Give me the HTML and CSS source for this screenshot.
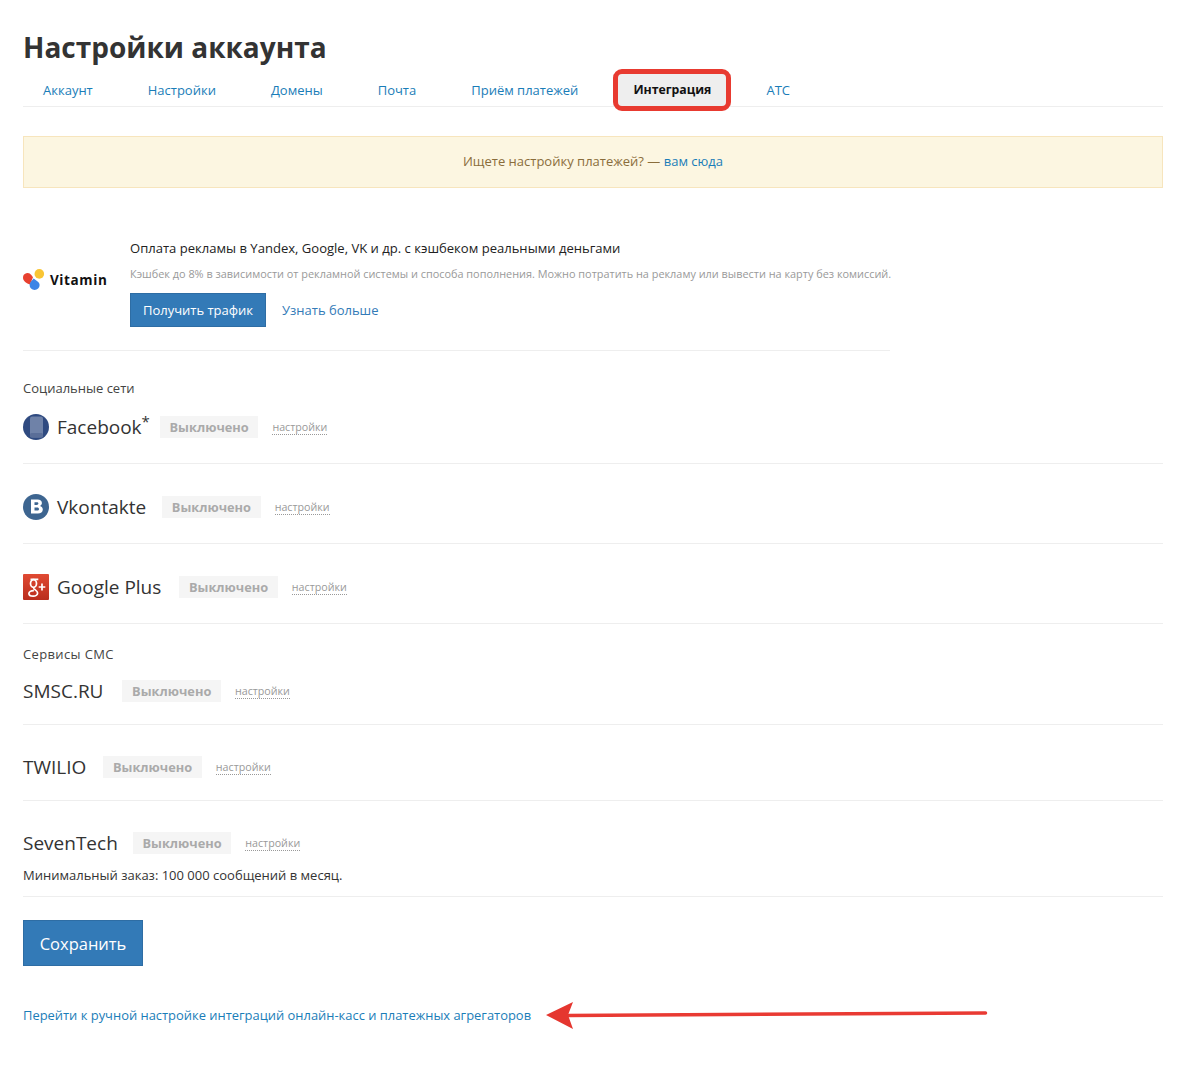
FILE: index.html
```html
<!DOCTYPE html>
<html lang="ru">
<head>
<meta charset="utf-8">
<title>Настройки аккаунта</title>
<link rel="stylesheet" href="styles.css">
</head>
<body>
<main class="page">
  <h1 class="title">Настройки аккаунта</h1>
  <nav class="tabs">
    <a class="tab">Аккаунт</a>
    <a class="tab">Настройки</a>
    <a class="tab">Домены</a>
    <a class="tab">Почта</a>
    <a class="tab">Приём платежей</a>
    <a class="tab tab-active">Интеграция</a>
    <a class="tab">АТС</a>
  </nav>
  <div class="notice">Ищете настройку платежей? — <a class="link">вам сюда</a></div>

  <section class="promo">
    <div class="vitamin">
      <svg class="vitamin-mark" width="22" height="22" viewBox="0 0 22 22" aria-hidden="true">
        <circle cx="16.300" cy="4.900" r="4.800" fill="#f9c534"/>
        <path d="M0 8.700a4.600 4.600 0 0 1 8.300-2.700l1.700 2.300-3 7.200C3.500 14.500 0 11.800 0 8.700z" fill="#e8412f"/>
        <path d="M10.500 9.500c2 1.600 6.100 3.300 6.100 6.500a5 5 0 0 1-10 0c0-2.800 2.800-4.700 3.900-6.500z" fill="#3d85e6"/>
      </svg>
      <span class="vitamin-name">Vitamin</span>
    </div>
    <div class="promo-body">
      <div class="promo-head">Оплата рекламы в Yandex, Google, VK и др. с кэшбеком реальными деньгами</div>
      <div class="promo-note">Кэшбек до 8% в зависимости от рекламной системы и способа пополнения. Можно потратить на рекламу или вывести на карту без комиссий.</div>
      <div class="promo-actions">
        <a class="btn btn-small">Получить трафик</a>
        <a class="more">Узнать больше</a>
      </div>
    </div>
  </section>

  <h2 class="group group-social">Социальные сети</h2>
  <div class="row row-fb">
    <svg class="icon" width="26" height="26" viewBox="0 0 26 26" aria-hidden="true">
      <circle cx="13" cy="13" r="13" fill="#2f4a80"/>
      <rect x="7" y="2.500" width="13" height="21" rx="2" fill="#6f82a8"/>
      <rect x="7" y="19" width="13" height="4.500" rx="1.500" fill="#5a6e98"/>
    </svg>
    <span class="name">Facebook<sup class="star">*</sup></span>
    <span class="status">Выключено</span>
    <a class="cfg">настройки</a>
  </div>
  <div class="row row-vk">
    <svg class="icon" width="26" height="26" viewBox="0 0 26 26" aria-hidden="true">
      <circle cx="13" cy="13" r="13" fill="#3d6590"/>
      <path d="M8 5.500h6.500c2.800 0 4.400 1.400 4.400 3.500 0 1.400-.8 2.500-2 3 1.800.4 2.900 1.800 2.900 3.500 0 2.500-2 4-5 4H8zm3.500 2.800v2.600h2.300c1 0 1.600-.5 1.600-1.300s-.6-1.300-1.600-1.300zm0 5.200v3.100h2.700c1.100 0 1.800-.6 1.800-1.550s-.7-1.550-1.800-1.550z" fill="#fff" fill-rule="evenodd"/>
    </svg>
    <span class="name">Vkontakte</span>
    <span class="status">Выключено</span>
    <a class="cfg">настройки</a>
  </div>
  <div class="row row-gp">
    <svg class="icon" width="26" height="26" viewBox="0 0 26 26" aria-hidden="true">
      <defs>
        <linearGradient id="gp-bg" x1="0" y1="0" x2="0" y2="1">
          <stop offset="0" stop-color="#e04a33"/>
          <stop offset="1" stop-color="#b92d1d"/>
        </linearGradient>
      </defs>
      <rect width="26" height="26" rx="1" fill="url(#gp-bg)"/>
      <ellipse cx="10.500" cy="9.500" rx="3" ry="3.800" fill="none" stroke="#fff" stroke-width="1.700"/>
      <path d="M7.500 5.300h7.800M11 13.800c-1.300 1.300 3.600 2.600 3.600 5.100 0 2-2.200 3.300-4.400 3.300-2.500 0-4.300-1-4.300-2.700s2.100-3 5-2.900" fill="none" stroke="#fff" stroke-width="1.700"/>
      <path d="M19 9.500v7M15.700 13h6.600" stroke="#fff" stroke-width="1.700"/>
    </svg>
    <span class="name">Google Plus</span>
    <span class="status">Выключено</span>
    <a class="cfg">настройки</a>
  </div>

  <h2 class="group group-sms">Сервисы СМС</h2>
  <div class="row row-smsc">
    <span class="name">SMSC.RU</span>
    <span class="status">Выключено</span>
    <a class="cfg">настройки</a>
  </div>
  <div class="row row-twilio">
    <span class="name">TWILIO</span>
    <span class="status">Выключено</span>
    <a class="cfg">настройки</a>
  </div>
  <div class="row-seven">
    <div class="seven-line">
      <span class="name">SevenTech</span>
      <span class="status">Выключено</span>
      <a class="cfg">настройки</a>
    </div>
    <p class="min-order">Минимальный заказ: 100 000 сообщений в месяц.</p>
  </div>

  <a class="btn btn-save">Сохранить</a>
  <a class="manual link">Перейти к ручной настройке интеграций онлайн-касс и платежных агрегаторов</a>
</main>
<svg class="arrow" width="450" height="34" viewBox="0 0 450 34" aria-hidden="true">
  <path d="M22 16.500L439.500 14" stroke="#e93a33" stroke-width="3.500" stroke-linecap="round" fill="none"/>
  <path d="M0 16L27 3l-5 13 5 14z" fill="#e5362f"/>
</svg>
</body>
</html>
```
FILE: styles.css
```css
* { box-sizing: border-box; }
html, body { margin: 0; padding: 0; background: #fff; }
body {
  position: relative;
  height: 1089px;
  overflow: hidden;
  font-family: "Open Sans", "Noto Sans", sans-serif;
  color: #333;
}
.page { width: 1140px; margin-left: 23px; display: flex; flex-direction: column; }
.title {
  margin: 27px 0 0;
  font-size: 28px;
  line-height: 40px;
  font-weight: 700;
  color: #333;
}
.tabs {
  display: flex;
  align-items: flex-end;
  gap: 15px;
  height: 40px;
  border-bottom: 1px solid #eee;
}
.tab {
  padding: 0 20px;
  font-size: 13px;
  line-height: 32px;
  color: #1a7db8;
}
.tab-active {
  position: relative;
  background: #eee;
  color: #111;
  font-size: 12.300px;
  font-weight: 700;
}
.tab-active::after {
  content: "";
  position: absolute;
  inset: -5px 0 -5px 0;
  border: 5px solid #e83a30;
  border-radius: 9px;
}
.notice {
  margin-top: 29px;
  height: 52px;
  padding-bottom: 2px;
  display: flex;
  align-items: center;
  justify-content: center;
  white-space: pre;
  background: #fcf6e1;
  border: 1px solid #f7e5bd;
  font-size: 13px;
  color: #8a6d3b;
}
.link { color: #1a7db8; }
.promo {
  margin-top: 46px;
  width: 867px;
  height: 117px;
  display: flex;
  align-items: flex-start;
  border-bottom: 1px solid #eee;
}
.vitamin { flex: none; width: 107px; margin-top: 35px; display: flex; align-items: center; gap: 5px; }
.vitamin-mark { flex: none; }
.vitamin-name { font-size: 13.500px; font-weight: 700; color: #111; letter-spacing: .6px; }
.promo-body { flex: 1; padding-top: 4px; }
.promo-head { font-size: 13.050px; line-height: 20px; color: #222; }
.promo-note { margin-top: 8px; font-size: 10.900px; line-height: 16px; color: #999; white-space: nowrap; }
.promo-actions { margin-top: 11px; display: flex; align-items: center; gap: 16px; }
.btn { display: flex; align-items: center; justify-content: center; color: #fff; background: #337ab7; border: 1px solid #2e6da4; }
.btn-small { width: 136px; height: 34px; font-size: 13px; }
.more { font-size: 13px; color: #337ab7; }
.group { margin: 0; font-weight: 400; font-size: 13px; line-height: 20px; color: #444; }
.group-social { margin-top: 27px; }
.group-sms { margin-top: 20px; letter-spacing: .36px; }
.row { display: flex; align-items: center; border-bottom: 1px solid #eee; }
.row-fb { height: 66px; padding-bottom: 7px; }
.row-vk, .row-gp { height: 80px; padding-top: 7px; }
.row-smsc { height: 61px; padding-bottom: 7px; }
.row-twilio { height: 76px; padding-top: 9px; }
.icon { flex: none; margin-right: 8px; }
.name { font-size: 19px; line-height: 26px; color: #333; white-space: nowrap; }
.star { font-size: 15px; line-height: 0; vertical-align: 7px; }
.status {
  margin-left: 16px;
  width: 98.500px;
  height: 22px;
  display: flex;
  align-items: center;
  justify-content: center;
  background: #f5f5f5;
  font-size: 12.800px;
  font-weight: 700;
  color: #aaa;
}
.row-fb .status { margin-left: 10px; }
.row-gp .status { margin-left: 18px; }
.row-smsc .status { margin-left: 19px; }
.row-twilio .status { margin-left: 17px; }
.row-seven .status { margin-left: 15px; }
.cfg {
  margin-left: 14px;
  margin-top: 2px;
  font-size: 10.700px;
  line-height: 13px;
  color: #999;
  border-bottom: 1px dotted #999;
}
.row-seven { height: 96px; padding-top: 29px; border-bottom: 1px solid #eee; }
.seven-line { display: flex; align-items: center; height: 26px; }
.min-order { margin: 9px 0 0; font-size: 13px; line-height: 20px; color: #333; }
.btn-save { margin-top: 23px; width: 120px; height: 46px; font-size: 16.500px; }
.manual { margin-top: 39px; font-size: 12.930px; line-height: 20px; }
.arrow { position: absolute; left: 546px; top: 999px; }
```
